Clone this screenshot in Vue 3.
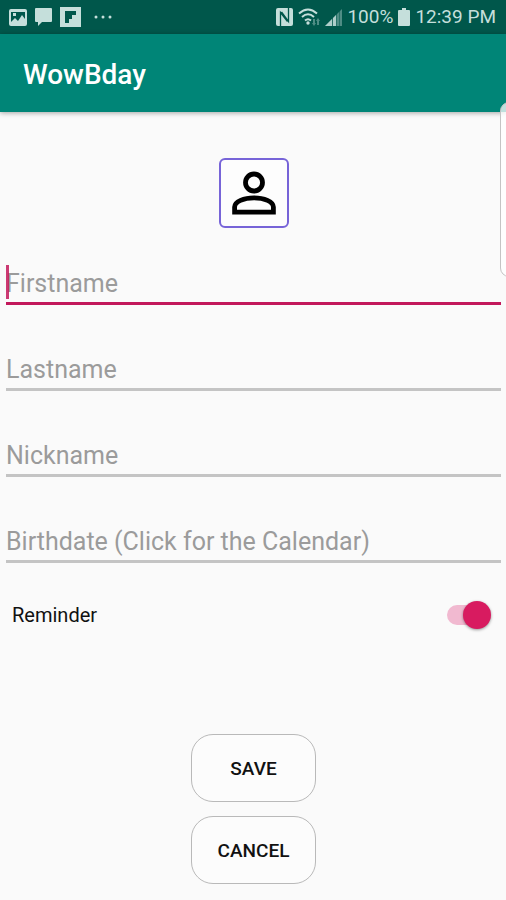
<script setup>
import { reactive, ref } from 'vue'

const fields = reactive([
  { id: 'firstname', label: 'Firstname', value: '', active: true },
  { id: 'lastname', label: 'Lastname', value: '', active: false },
  { id: 'nickname', label: 'Nickname', value: '', active: false },
  { id: 'birthdate', label: 'Birthdate (Click for the Calendar)', value: '', active: false },
])
const reminder = ref(true)

function activate(field) {
  fields.forEach((f) => { f.active = f === field })
}
</script>

<template>
  <div class="screen">
    <div class="status">
      <div class="status-left">
        <svg class="ic-picture" width="18" height="17" viewBox="0 0 18 17" aria-hidden="true">
          <path fill="currentColor" fill-rule="evenodd" d="M2 0h14a2 2 0 0 1 2 2v13a2 2 0 0 1-2 2H2a2 2 0 0 1-2-2V2a2 2 0 0 1 2-2zM2 3v10l4-4 3 3 4-6 3 4V3zM4 4h3v3H4z" />
        </svg>
        <svg width="17" height="18" viewBox="0 0 17 18" aria-hidden="true">
          <path fill="currentColor" d="M1 0h15a1 1 0 0 1 1 1v12a1 1 0 0 1-1 1H7l-4 4v-4H1a1 1 0 0 1-1-1V1a1 1 0 0 1 1-1z" />
        </svg>
        <svg width="21" height="20" viewBox="0 0 21 20" aria-hidden="true">
          <path fill="currentColor" fill-rule="evenodd" d="M0 0h21v20H0zM5 4v12h4v-4h3V8h4V4z" />
        </svg>
        <svg class="ic-more" width="18" height="4" viewBox="0 0 18 4" aria-hidden="true">
          <g fill="currentColor"><circle cx="2" cy="2" r="1.5" /><circle cx="9" cy="2" r="1.5" /><circle cx="16" cy="2" r="1.5" /></g>
        </svg>
      </div>
      <div class="status-right">
        <svg width="17" height="18" viewBox="0 0 17 18" aria-hidden="true">
          <path fill="currentColor" d="M2 0h13a2 2 0 0 1 2 2v14a2 2 0 0 1-2 2H2a2 2 0 0 1-2-2V2a2 2 0 0 1 2-2z" />
          <path fill="none" stroke="#00574b" stroke-width="1.300" d="M4.500 18V4.500l7 9M12.500 0v13.500L5.500 4" />
        </svg>
        <svg width="22" height="18" viewBox="0 0 22 18" aria-hidden="true">
          <g fill="none" stroke="currentColor" stroke-width="2">
            <path d="M1 5.500Q10 -2.500 19 5.500" /><path d="M4 9Q10 3.500 16 9" /><path d="M7 12.500Q10 10 13 12.500" />
          </g>
          <circle cx="10" cy="15" r="1.700" fill="currentColor" />
          <path fill="currentColor" opacity=".4" d="M15 11v4h-1l2 3 2-3h-1v-4zM19 17v-4h-1l2-3 2 3h-1v4z" />
        </svg>
        <svg width="17" height="17" viewBox="0 0 17 17" aria-hidden="true">
          <path fill="currentColor" opacity=".4" d="M0 17L17 0v17z" />
          <path fill="currentColor" d="M0 17l7-7v7zM8 9l3-3v11H8z" opacity=".8" />
          <path stroke="#00574b" d="M7.500 8v9M11.500 4v13M14.500 2v15" opacity=".5" />
        </svg>
        <span class="percent">100%</span>
        <svg width="12" height="18" viewBox="0 0 12 18" aria-hidden="true">
          <path fill="currentColor" d="M4 0h4v2h3a1 1 0 0 1 1 1v14a1 1 0 0 1-1 1H1a1 1 0 0 1-1-1V3a1 1 0 0 1 1-1h3z" />
        </svg>
        <span>12:39 PM</span>
      </div>
    </div>

    <header class="appbar"><h1>WowBday</h1></header>
    <div class="edge-panel"></div>

    <form class="form" @submit.prevent>
      <button type="button" class="avatar" aria-label="Choose photo">
        <svg width="44" height="44" viewBox="0 0 44 44" aria-hidden="true">
          <circle cx="22" cy="11.500" r="8.500" fill="none" stroke="#000" stroke-width="4.800" />
          <path fill="none" stroke="#000" stroke-width="4.800" d="M2.600 41.200V36C2.600 30.500 12 26.800 22 26.800S41.400 30.500 41.400 36V41.200z" />
        </svg>
      </button>

      <div class="fields">
        <div v-for="f in fields" :key="f.id" class="field" :class="{ active: f.active }">
          <input :id="f.id" v-model="f.value" type="text" :placeholder="f.label" :aria-label="f.label" @focus="activate(f)">
          <span v-if="f.active && !f.value" class="cursor"></span>
        </div>
      </div>

      <div class="reminder">
        <label for="reminder">Reminder</label>
        <input id="reminder" v-model="reminder" type="checkbox" role="switch" class="switch">
      </div>

      <div class="actions">
        <button type="submit">SAVE</button>
        <button type="button">CANCEL</button>
      </div>
    </form>
  </div>
</template>

<style>
body { background: #fafafa; }
</style>

<style scoped>
.screen {
  position: relative;
  min-height: 100vh;
  overflow: hidden;
  background: #fafafa;
  font-family: Roboto, "Liberation Sans", sans-serif;
  color: #111;
}
.status {
  display: flex;
  justify-content: space-between;
  align-items: center;
  height: 34px;
  padding: 0 10px 0 9px;
  background: #00574b;
  color: #c5dfdb;
  font-size: 19px;
  line-height: 36px;
}
.status-left { display: flex; align-items: center; gap: 8px; }
.ic-more { margin-left: 5px; }
.status-right { display: flex; align-items: center; gap: 5px; }
.appbar {
  position: relative;
  display: flex;
  align-items: center;
  box-sizing: border-box;
  height: 78px;
  padding: 4px 23px 0;
  background: #008577;
  box-shadow: 0 1px 5px rgba(0, 0, 0, .35);
}
h1 {
  margin: 0;
  color: #fff;
  font-size: 28px;
  font-weight: 500;
  line-height: 32px;
}
.edge-panel {
  position: absolute;
  top: 102px;
  right: -12px;
  box-sizing: border-box;
  width: 18px;
  height: 175px;
  border: 1px solid #c4c4c4;
  border-radius: 9px;
  background: rgba(255, 255, 255, .75);
}
.form {
  display: flex;
  flex-direction: column;
  padding: 46px 5px 16px 6px;
}
.avatar {
  display: flex;
  align-items: center;
  justify-content: center;
  align-self: center;
  width: 70px;
  height: 70px;
  padding: 0;
  border: 2px solid #7764d8;
  border-radius: 6px;
  background: #fdfdfd;
}
.fields {
  display: flex;
  flex-direction: column;
  gap: 44px;
  margin-top: 36px;
}
.field { position: relative; height: 42px; }
.field input {
  display: block;
  box-sizing: border-box;
  width: 100%;
  height: 41px;
  padding: 1px 0 0;
  border: 0;
  border-bottom: 3px solid #c4c4c4;
  border-radius: 0;
  outline: 0;
  background: transparent;
  color: #111;
  font-family: inherit;
  font-size: 25px;
}
.field.active input { border-bottom-color: #c2185b; }
.field input::placeholder { color: #9b9b9b; opacity: 1; }
.cursor {
  position: absolute;
  top: 1px;
  left: 0;
  width: 3px;
  height: 34px;
  background: rgba(194, 24, 91, .85);
}
.reminder {
  display: flex;
  align-items: center;
  justify-content: space-between;
  height: 32px;
  margin-top: 35px;
  padding: 0 10px 0 6px;
  font-size: 20px;
}
.switch {
  appearance: none;
  display: flex;
  align-items: center;
  width: 44px;
  height: 20px;
  margin: 0;
  border-radius: 10px;
  background: linear-gradient(#f1b9d0, #f1b9d0) 0 0 / 40px 20px no-repeat;
}
.switch::before {
  content: "";
  width: 28px;
  height: 28px;
  flex: none;
  border-radius: 50%;
  background: #fafafa;
  box-shadow: 0 1px 3px rgba(0, 0, 0, .4);
}
.switch:checked::before { margin-left: auto; background: #d81b60; }
.actions {
  display: flex;
  flex-direction: column;
  align-items: center;
  gap: 14px;
  margin-top: 103px;
}
.actions button {
  width: 125px;
  height: 68px;
  padding: 0;
  border: 1px solid #b9b9b9;
  border-radius: 22px;
  background: #fcfcfc;
  color: #111;
  font-family: inherit;
  font-size: 19px;
  font-weight: 500;
}
</style>
